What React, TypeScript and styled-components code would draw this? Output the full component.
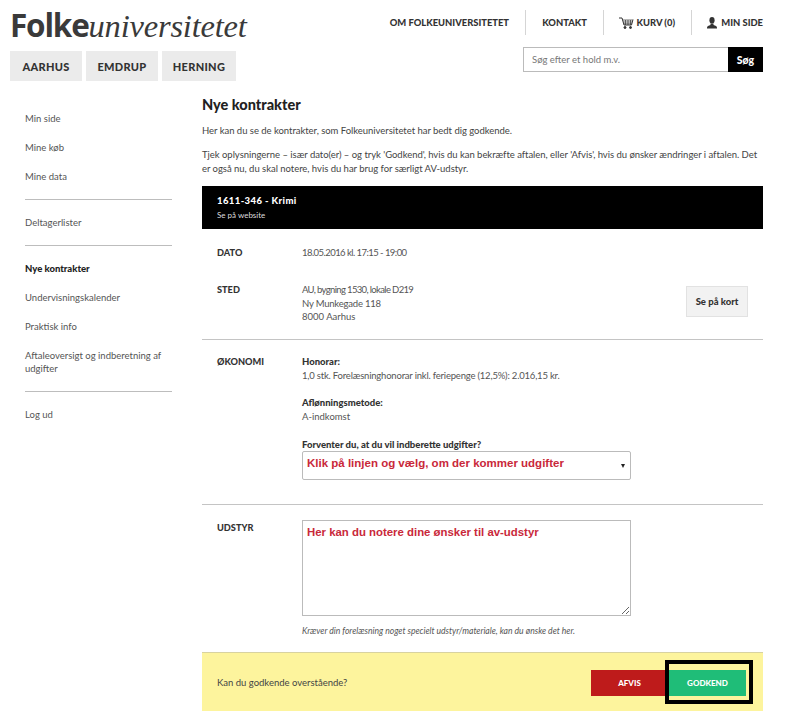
import React from "react";
import styled, { createGlobalStyle } from "styled-components";

const Global = createGlobalStyle`
  html, body { margin: 0; padding: 0; background: #fff; overflow: hidden; }
  body { font-family: Lato, "Noto Sans", sans-serif; color: #444; font-size: 10px; }
  * { box-sizing: border-box; }
`;

const Page = styled.div`
  width: 790px;
  height: 719px;
  overflow: hidden;
`;

const Header = styled.header`
  height: 92px;
  padding: 0 27px 0 10px;
  display: flex;
  justify-content: space-between;
`;

const Brand = styled.div`
  display: flex;
  flex-direction: column;
`;

const Logo = styled.div`
  height: 51px;
  padding: 5px 0 0 0;
  font-size: 31.5px;
  line-height: 40px;
  white-space: nowrap;
  color: #3a3a3a;
`;

const LogoBold = styled.span`
  font-family: "Open Sans", sans-serif;
  font-weight: 700;
  letter-spacing: -1.2px;
`;

const LogoItalic = styled.span`
  font-family: "Liberation Serif", serif;
  font-style: italic;
  font-size: 32.5px;
  letter-spacing: -0.2px;
`;

const Tabs = styled.nav`
  display: flex;
  gap: 4px;
`;

const Tab = styled.a<{ $w: number }>`
  width: ${(p) => p.$w}px;
  height: 30px;
  background: #ebebeb;
  color: #333;
  font-weight: 900;
  font-size: 11px;
  letter-spacing: 0.3px;
  display: flex;
  align-items: center;
  justify-content: center;
`;

const Tools = styled.div`
  display: flex;
  flex-direction: column;
  align-items: flex-end;
`;

const TopNav = styled.nav`
  height: 47px;
  padding-top: 10px;
  display: flex;
  align-items: flex-start;
`;

const TopItem = styled.a<{ $w?: number; $sep?: boolean }>`
  ${(p) => (p.$w ? `width: ${p.$w}px;` : "")}
  height: 25px;
  display: flex;
  align-items: center;
  justify-content: flex-end;
  gap: 3px;
  font-size: 9.4px;
  font-weight: 900;
  color: #333;
  white-space: nowrap;
  ${(p) => (p.$sep ? "border-right: 1px solid #d5d5d5; padding-right: 16px;" : "")}
`;

const Search = styled.form`
  width: 240px;
  height: 25px;
  display: flex;
`;

const SearchInput = styled.input`
  flex: 1;
  min-width: 0;
  height: 25px;
  border: 1px solid #bbb;
  border-right: 0;
  padding: 0 8px;
  font-family: inherit;
  font-size: 9.5px;
  outline: none;
  &::placeholder { color: #777; opacity: 1; }
`;

const SearchButton = styled.button`
  width: 35px;
  height: 25px;
  border: 0;
  padding: 0;
  background: #000;
  color: #fff;
  font-family: inherit;
  font-weight: 900;
  font-size: 10.5px;
`;

const Body = styled.div`
  display: flex;
  padding: 0 27px 0 25px;
`;

const Sidebar = styled.aside`
  width: 147px;
  margin-right: 30px;
  padding-top: 20px;
  display: flex;
  flex-direction: column;
`;

const SideLink = styled.a<{ $active?: boolean }>`
  display: block;
  font-size: 9.5px;
  line-height: 13px;
  margin-bottom: 16px;
  color: ${(p) => (p.$active ? "#222" : "#555")};
  font-weight: ${(p) => (p.$active ? 900 : 400)};
`;

const SideRule = styled.hr`
  width: 100%;
  height: 1px;
  border: 0;
  margin: 0 0 16px;
  background: #bdbdbd;
`;

const Main = styled.main`
  width: 561px;
`;

const Title = styled.h1`
  margin: 0;
  padding-top: 3px;
  height: 32px;
  font-size: 14.5px;
  line-height: 20px;
  font-weight: 900;
  color: #222;
`;

const Para = styled.p`
  margin: 0 0 10px;
  font-size: 9.5px;
  line-height: 14px;
  letter-spacing: -0.03px;
  color: #444;
`;

const Bar = styled.div`
  margin-top: 3px;
  height: 43px;
  padding: 8px 15px;
  background: #000;
  color: #fff;
`;

const BarTitle = styled.div`
  font-size: 9.5px;
  line-height: 14px;
  letter-spacing: 0.4px;
  font-weight: 900;
`;

const BarLink = styled.a`
  display: block;
  font-size: 8px;
  line-height: 14px;
  color: #ddd;
`;

const Row = styled.section<{ $h: number; $top: number; $rule?: boolean }>`
  height: ${(p) => p.$h}px;
  padding: ${(p) => p.$top}px 15px 0;
  display: flex;
  position: relative;
  ${(p) => (p.$rule ? "border-bottom: 1px solid #c4c4c4;" : "")}
`;

const Label = styled.div<{ $drop?: number }>`
  width: 85px;
  margin-top: ${(p) => p.$drop ?? 0}px;
  font-size: 9.2px;
  line-height: 14px;
  font-weight: 900;
  color: #333;
`;

const Value = styled.div`
  flex: 1;
  font-size: 9.5px;
  line-height: 13.7px;
  color: #555;
`;

const Line = styled.div<{ $tight?: number }>`
  letter-spacing: ${(p) => p.$tight ?? 0}px;
  white-space: nowrap;
`;

const Strong = styled.div<{ $gap?: number }>`
  font-weight: 900;
  color: #333;
  margin-top: ${(p) => p.$gap ?? 0}px;
`;

const MapButton = styled.a`
  align-self: flex-start;
  margin-top: 3px;
  width: 62px;
  height: 31px;
  background: #f2f2f2;
  border: 1px solid #e2e2e2;
  color: #333;
  font-weight: 900;
  font-size: 9.5px;
  display: flex;
  align-items: center;
  justify-content: center;
`;

const SelectBox = styled.div`
  position: relative;
  width: 329px;
  height: 29px;
  margin-top: -1px;
`;

const Select = styled.select`
  appearance: none;
  width: 100%;
  height: 100%;
  border: 1px solid #bbb;
  border-radius: 2px;
  background: #fff;
  padding: 0 4px 5px;
  font-family: "Liberation Sans", Arial, sans-serif;
  font-weight: 700;
  font-size: 11.5px;
  color: #c9283a;
`;

const Arrow = styled.span`
  position: absolute;
  right: 6px;
  top: 13px;
  width: 0;
  height: 0;
  border-left: 2.5px solid transparent;
  border-right: 2.5px solid transparent;
  border-top: 4px solid #222;
`;

const Notes = styled.textarea`
  display: block;
  width: 329px;
  height: 96px;
  border: 1px solid #bbb;
  padding: 3px 4px;
  font-family: "Liberation Sans", Arial, sans-serif;
  font-weight: 700;
  font-size: 11.4px;
  line-height: 16px;
  color: #c9283a;
  outline: none;
`;

const Hint = styled.div`
  margin-top: 9px;
  font-size: 8.6px;
  line-height: 12px;
  font-style: italic;
  color: #555;
`;

const Confirm = styled.div`
  height: 59px;
  background: #fdf49d;
  border-top: 1px solid #d8d2a0;
  padding: 0 17px 0 15px;
  display: flex;
  align-items: center;
  justify-content: space-between;
  font-size: 9.5px;
  color: #444;
`;

const Actions = styled.div`
  display: flex;
  gap: 1px;
  margin-top: 1px;
`;

const ActionButton = styled.button<{ $tone: "red" | "green" }>`
  width: 77px;
  height: 26px;
  border: 0;
  padding: 0;
  background: ${(p) => (p.$tone === "red" ? "#be1b1b" : "#1fbd78")};
  color: #fff;
  font-family: inherit;
  font-weight: 900;
  font-size: 8px;
  position: relative;
`;

const Highlight = styled.span`
  position: absolute;
  left: -4px;
  top: -10px;
  right: -7px;
  bottom: -8px;
  border: 4px solid #000;
`;

const Cart = () => (
  <svg width="15" height="12" viewBox="0 0 15 12" fill="none" stroke="#333" strokeWidth="1">
    <path d="M0 1h3l2 7h7.500L14 2.500" />
    <path d="M3.600 3h10M4.200 5h9M4.800 6.800h8M6.500 3v5M9 3v5M11.500 3v5" strokeWidth="0.7" />
    <circle cx="6" cy="10.500" r="1" fill="#333" />
    <circle cx="11.500" cy="10.500" r="1" fill="#333" />
  </svg>
);

const User = () => (
  <svg width="12" height="12" viewBox="0 0 12 12" fill="#333">
    <ellipse cx="6" cy="3.200" rx="2.600" ry="3.200" />
    <path d="M4.500 6.500h3v1.500c2 .6 3.500 1.200 3.500 2.800V11.500H1v-.7C1 9.200 2.500 8.600 4.500 8z" />
  </svg>
);

export default function App() {
  return (
    <Page>
      <Global />
      <Header>
        <Brand>
          <Logo>
            <LogoBold>Folke</LogoBold>
            <LogoItalic>universitetet</LogoItalic>
          </Logo>
          <Tabs>
            <Tab $w={72}>AARHUS</Tab>
            <Tab $w={72}>EMDRUP</Tab>
            <Tab $w={74}>HERNING</Tab>
          </Tabs>
        </Brand>
        <Tools>
          <TopNav>
            <TopItem $sep>OM FOLKEUNIVERSITETET</TopItem>
            <TopItem $w={78} $sep>KONTAKT</TopItem>
            <TopItem $w={88} $sep><Cart />KURV (0)</TopItem>
            <TopItem $w={71}><User />MIN SIDE</TopItem>
          </TopNav>
          <Search>
            <SearchInput placeholder="Søg efter et hold m.v." />
            <SearchButton type="button">Søg</SearchButton>
          </Search>
        </Tools>
      </Header>
      <Body>
        <Sidebar>
          <SideLink>Min side</SideLink>
          <SideLink>Mine køb</SideLink>
          <SideLink>Mine data</SideLink>
          <SideRule />
          <SideLink>Deltagerlister</SideLink>
          <SideRule />
          <SideLink $active>Nye kontrakter</SideLink>
          <SideLink>Undervisningskalender</SideLink>
          <SideLink>Praktisk info</SideLink>
          <SideLink>Aftaleoversigt og indberetning af udgifter</SideLink>
          <SideRule />
          <SideLink>Log ud</SideLink>
        </Sidebar>
        <Main>
          <Title>Nye kontrakter</Title>
          <Para>Her kan du se de kontrakter, som Folkeuniversitetet har bedt dig godkende.</Para>
          <Para>
            Tjek oplysningerne – især dato(er) – og tryk 'Godkend', hvis du kan bekræfte aftalen, eller 'Afvis', hvis du ønsker ændringer i aftalen. Det er også nu, du skal notere, hvis du har brug for særligt AV-udstyr.
          </Para>
          <Bar>
            <BarTitle>1611-346 - Krimi</BarTitle>
            <BarLink>Se på website</BarLink>
          </Bar>
          <Row $h={38} $top={17}>
            <Label>DATO</Label>
            <Value>
              <Line $tight={-0.55}>18.05.2016 kl. 17:15 - 19:00</Line>
            </Value>
          </Row>
          <Row $h={73} $top={16} $rule>
            <Label>STED</Label>
            <Value>
              <Line $tight={-0.65}>AU, bygning 1530, lokale D219</Line>
              <Line $tight={-0.2}>Ny Munkegade 118</Line>
              <Line>8000 Aarhus</Line>
            </Value>
            <MapButton>Se på kort</MapButton>
          </Row>
          <Row $h={165} $top={15} $rule>
            <Label>ØKONOMI</Label>
            <Value>
              <Strong>Honorar:</Strong>
              <Line $tight={-0.2}>1,0 stk. Forelæsninghonorar inkl. feriepenge (12,5%): 2.016,15 kr.</Line>
              <Strong $gap={14}>Aflønningsmetode:</Strong>
              A-indkomst
              <Strong $gap={14}>Forventer du, at du vil indberette udgifter?</Strong>
              <SelectBox>
                <Select defaultValue="a">
                  <option value="a">Klik på linjen og vælg, om der kommer udgifter</option>
                </Select>
                <Arrow />
              </SelectBox>
            </Value>
          </Row>
          <Row $h={147} $top={15}>
            <Label $drop={1}>UDSTYR</Label>
            <Value>
              <Notes defaultValue="Her kan du notere dine ønsker til av-udstyr" />
              <Hint>Kræver din forelæsning noget specielt udstyr/materiale, kan du ønske det her.</Hint>
            </Value>
          </Row>
          <Confirm>
            Kan du godkende overstående?
            <Actions>
              <ActionButton $tone="red" type="button">AFVIS</ActionButton>
              <ActionButton $tone="green" type="button">
                GODKEND
                <Highlight />
              </ActionButton>
            </Actions>
          </Confirm>
        </Main>
      </Body>
    </Page>
  );
}
